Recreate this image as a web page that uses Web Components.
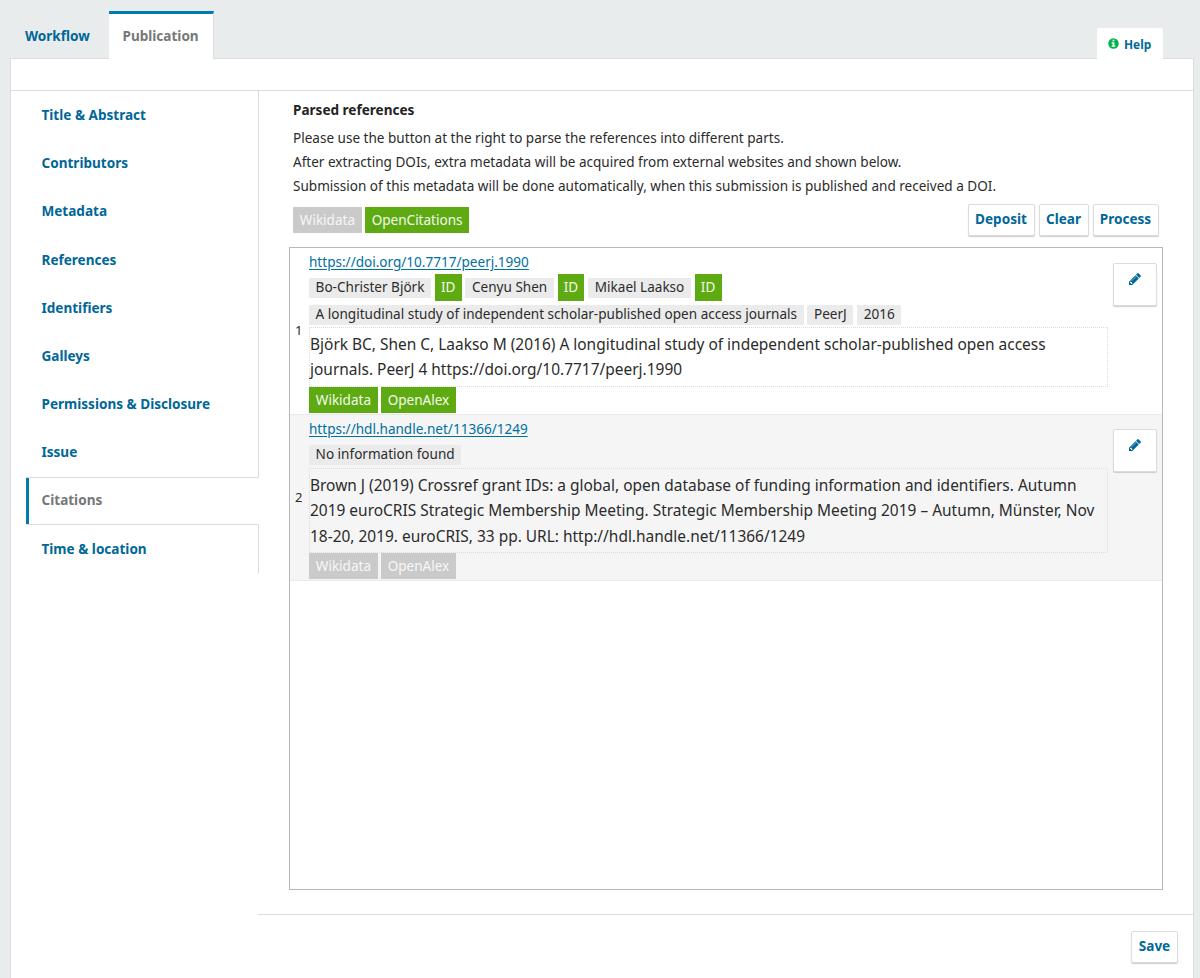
<!DOCTYPE html>
<html lang="en">
<head>
<meta charset="utf-8">
<title>Publication</title>
<style>
html,body{margin:0;height:100%}
body{background:#e9ecec;font-family:"Noto Sans","Open Sans",sans-serif;font-size:13.55px;color:#2b2b2b;overflow:hidden;--blue:#006798;--line:#dcdcdc}
</style>
</head>
<body>
<pub-page></pub-page>
<script>
function define(name, html, setup){
  const t=document.createElement('template');
  t.innerHTML=html;
  customElements.define(name,class extends HTMLElement{
    constructor(){
      super();
      this.attachShadow({mode:'open'}).append(t.content.cloneNode(true));
    }
    connectedCallback(){ if(setup) setup(this); }
  });
}

define('ui-button',`<style>
:host{display:flex;box-sizing:border-box;height:32px;align-items:center;justify-content:center;background:#fff;border:1px solid #dcdcdc;border-radius:2px;box-shadow:0 1px 1px #ccc;color:var(--blue);font-weight:700;white-space:nowrap}
span{position:relative;top:-1px}
</style><span><slot></slot></span>`);

define('edit-button',`<style>
:host{display:block;box-sizing:border-box;width:44px;height:43px;background:#fff;border:1px solid #dcdcdc;border-radius:2px;box-shadow:0 1px 1px #ccc}
svg{display:block;margin:8px auto 0;width:14px;height:14px;fill:var(--blue)}
</style><svg viewBox="0 0 12 14"><path d="M2.8 12l.7-.7-1.8-1.8-.7.7V11h1v1zM6.9 4.75c0-.1-.07-.17-.17-.17-.05 0-.1.02-.13.05L2.4 8.85c-.04.03-.06.08-.06.13 0 .1.07.17.17.17.05 0 .1-.02.13-.05L6.84 4.9c.04-.04.06-.1.06-.15zM6.5 3.25l3.25 3.25L3.25 13H0V9.75zM11.83 4c0 .27-.11.52-.29.7l-1.3 1.3L7 2.75l1.3-1.29a.98.98 0 0 1 1.41 0l1.83 1.83c.18.19.29.45.29.71z"/></svg>`);

define('name-tag',`<style>
:host{display:block;box-sizing:border-box;height:20px;line-height:19px;padding:0 6.6px;background:#ebebeb;white-space:nowrap}
</style><slot></slot>`);

define('status-chip',`<style>
:host{display:block;box-sizing:border-box;height:26px;line-height:26px;padding:0 6.8px;background:#cacaca;color:#f7f7f7;white-space:nowrap}
:host([on]){background:#5eaa12;color:#f3faec}
</style><slot></slot>`);

define('id-chip',`<style>
:host{display:block;box-sizing:border-box;width:26.8px;height:27px;line-height:26px;text-align:center;background:#5eaa12;color:#f3faec}
</style><slot></slot>`);

define('top-tabs',`<style>
:host{display:flex;height:48px;align-items:stretch;padding:11px 37px 0 11px;font-weight:700;color:var(--blue)}
.tab{box-sizing:border-box;height:47px;line-height:44px;width:98px;padding:3px 0 0 14px;font-size:13.55px}
.on{width:105px;height:48px;padding:0 0 0 13.5px;color:#777;background:#fff;border-top:3px solid #007ab2;border-right:1px solid #dcdcdc;position:relative}
.help{box-sizing:border-box;margin:17px 0 0 auto;width:66px;height:31px;background:#fff;border-radius:2px 2px 0 0;display:flex;align-items:center;font-size:11.9px;padding:0 0 0 11px;gap:5px;position:relative}
svg{width:11px;height:11px}
</style><div class="tab">Workflow</div><div class="tab on">Publication</div>
<div class="help"><svg viewBox="0 0 12 12"><circle cx="6" cy="6" r="5.7" fill="#00b24e"/><path fill="#fff" d="M5 1.9h2v1.6H5zM4 4.6h3v3.6h1v1.3H4V8.2h1V5.9H4z"/></svg><span>Help</span></div>`);

define('side-nav',`<style>
:host{display:block;width:248px;padding-left:15px;box-sizing:border-box}
::slotted(*){display:block;box-sizing:border-box;height:48.2px;line-height:48.4px;padding-left:15.5px;border-right:1px solid var(--line);color:var(--blue);font-weight:700}
::slotted([current]){color:#777;line-height:45px;border-right-color:transparent;border-top:1px solid var(--line);border-bottom:1px solid var(--line);background:linear-gradient(#007ab2,#007ab2) 0 0/3px 100% no-repeat}
</style><slot></slot>`);

define('citation-row',`<style>
:host{display:flex;box-sizing:border-box;padding:2px 4px 0 5px;height:166px}
:host([alt]){background:#f5f5f5;height:167px;border-top:1px solid #eaeaea;border-bottom:1px solid #eaeaea}
.num{width:14px;align-self:center;font-size:13px;padding-bottom:4px}
.body{width:799px}
.link{height:24px;line-height:24px;text-decoration:underline;color:#00709f;text-underline-offset:2px}
.text{box-sizing:border-box;border:1px dotted #dcdcdc;font-size:15.46px;line-height:25.4px;padding:4px 0 3px;white-space:nowrap}
.chips{display:flex;gap:3px}
:host(:not([alt])) .text{margin-top:-1px}
.edit{margin:13px 0 0 5px}
:host([alt]) .edit{margin-top:12px}
</style><div class="num"></div><div class="body"><div class="link"><slot name="link"></slot></div><slot name="tags"></slot><div class="text"><slot name="text"></slot></div><div class="chips"><slot name="chips"></slot></div></div><edit-button class="edit"></edit-button>`,
el=>{el.shadowRoot.querySelector('.num').textContent=el.getAttribute('number');});

define('tag-line',`<style>
:host{display:flex;align-items:center;height:27px;gap:3.8px}
</style><slot></slot>`);

define('pub-page',`<style>
:host{display:flex;flex-direction:column;width:1200px;height:978px}
.panel{flex:1;box-sizing:border-box;margin:-1px 6px 0 10px;border:1px solid var(--line);border-bottom:0;border-radius:2px 2px 0 0;background:#fff;display:flex;flex-direction:column}
.strip{height:31px;border-bottom:1px solid var(--line)}
.cols{flex:1;display:flex}
.main{flex:1;display:flex;flex-direction:column;padding:0 30px 0 30px}
.intro{height:107px;padding:7px 0 0 4px}
h2{margin:0;font-size:13.55px;line-height:24px;color:#222}
p{margin:0;line-height:24.2px}
.bar{display:flex;gap:4px;height:32px;margin:-1px 4.5px 0 4px;align-items:center}
.bar status-chip{margin-top:-1px;line-height:26px}
.bar status-chip+status-chip{margin-left:-1px}
.list{box-sizing:border-box;height:643px;margin-top:11px;border:1px solid #b8b8b8}
.foot{margin:24px -30px 0 -31px;border-top:1px solid var(--line);padding:16px 15px 0;display:flex;justify-content:flex-end}
top-tabs{z-index:1}
</style>
<top-tabs></top-tabs>
<div class="panel"><div class="strip"></div><div class="cols">
<side-nav><a>Title &amp; Abstract</a><a>Contributors</a><a>Metadata</a><a>References</a><a>Identifiers</a><a>Galleys</a><a>Permissions &amp; Disclosure</a><a>Issue</a><a current>Citations</a><a>Time &amp; location</a></side-nav>
<div class="main">
<div class="intro"><h2>Parsed references</h2><p style="margin-top:4px">Please use the button at the right to parse the references into different parts.</p><p>After extracting DOIs, extra metadata will be acquired from external websites and shown below.</p><p>Submission of this metadata will be done automatically, when this submission is published and received a DOI.</p></div>
<div class="bar"><status-chip>Wikidata</status-chip><status-chip on>OpenCitations</status-chip><ui-button style="margin-left:auto;width:67px">Deposit</ui-button><ui-button style="width:50px">Clear</ui-button><ui-button style="width:66px">Process</ui-button></div>
<div class="list">
<citation-row number="1"><span slot="link">https://doi.org/10.7717/peerj.1990</span>
<tag-line slot="tags"><name-tag>Bo-Christer Björk</name-tag><id-chip>ID</id-chip><name-tag>Cenyu Shen</name-tag><id-chip>ID</id-chip><name-tag>Mikael Laakso</name-tag><id-chip>ID</id-chip></tag-line>
<tag-line slot="tags"><name-tag>A longitudinal study of independent scholar-published open access journals</name-tag><name-tag>PeerJ</name-tag><name-tag>2016</name-tag></tag-line>
<span slot="text">Björk BC, Shen C, Laakso M (2016) A longitudinal study of independent scholar-published open access<br>journals. PeerJ 4 https://doi.org/10.7717/peerj.1990</span>
<status-chip slot="chips" on>Wikidata</status-chip><status-chip slot="chips" on>OpenAlex</status-chip></citation-row>
<citation-row number="2" alt><span slot="link">https://hdl.handle.net/11366/1249</span>
<tag-line slot="tags"><name-tag>No information found</name-tag></tag-line>
<span slot="text">Brown J (2019) Crossref grant IDs: a global, open database of funding information and identifiers. Autumn<br>2019 euroCRIS Strategic Membership Meeting. Strategic Membership Meeting 2019 – Autumn, Münster, Nov<br>18-20, 2019. euroCRIS, 33 pp. URL: http://hdl.handle.net/11366/1249</span>
<status-chip slot="chips">Wikidata</status-chip><status-chip slot="chips">OpenAlex</status-chip></citation-row>
</div>
<div class="foot"><ui-button style="width:47px">Save</ui-button></div>
</div></div></div>`);
</script>
</body>
</html>
